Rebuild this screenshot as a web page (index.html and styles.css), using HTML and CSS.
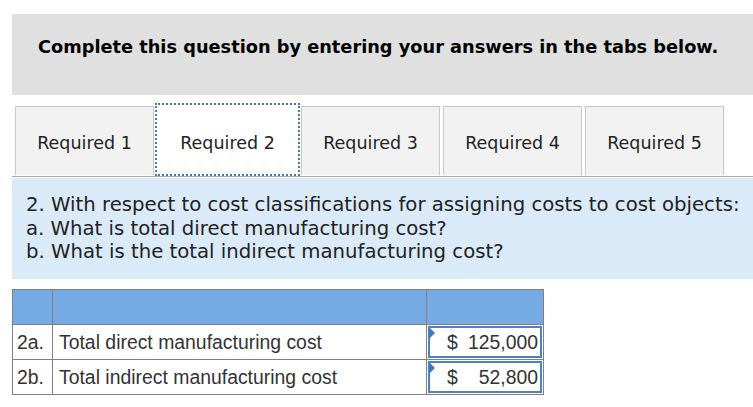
FILE: index.html
```html
<!DOCTYPE html>
<html>
<head>
<meta charset="utf-8">
<link rel="stylesheet" href="styles.css">
</head>
<body>
<div class="page">
  <div class="banner">Complete this question by entering your answers in the tabs below.</div>
  <div class="tabs">
    <div class="tab">Required 1</div>
    <div class="tab active">Required 2</div>
    <div class="tab">Required 3</div>
    <div class="tab">Required 4</div>
    <div class="tab">Required 5</div>
  </div>
  <div class="question">
    <div>2. With respect to cost classifications for assigning costs to cost objects:</div>
    <div>a. What is total direct manufacturing cost?</div>
    <div>b. What is the total indirect manufacturing cost?</div>
  </div>
  <table class="grid">
    <tr class="head"><td class="c1"></td><td class="c2"></td><td class="c3"></td></tr>
    <tr><td class="c1">2a.</td><td class="c2">Total direct manufacturing cost</td><td class="c3"><div class="input"><span class="cur">$</span><span class="val">125,000</span></div></td></tr>
    <tr><td class="c1">2b.</td><td class="c2">Total indirect manufacturing cost</td><td class="c3"><div class="input"><span class="cur">$</span><span class="val">52,800</span></div></td></tr>
  </table>
</div>
</body>
</html>
```
FILE: styles.css
```css
html, body { margin: 0; padding: 0; background: #fff; }
.page { padding: 14px 0 0 12px; font-family: "DejaVu Sans", Verdana, sans-serif; color: #222; }
.banner {
  height: 81px; background: #e0e0e0; padding: 22px 0 0 26px; font-weight: bold;
  font-size: 17.75px; line-height: 22px; color: #000; box-sizing: border-box;
}
.tabs {
  margin-top: 11px; display: flex; gap: 3px; padding-left: 3px;
  border-bottom: 1px solid #aaa; height: 70px; align-items: flex-start;
}
.tab {
  width: 139px; height: 69px; box-sizing: border-box; background: #f2f2f2;
  border: 1px solid #c8c8c8; border-bottom: none; display: flex; align-items: center;
  justify-content: center; font-size: 17.5px; color: #222; padding-top: 3px;
}
.tab.active {
  background: #fff; height: 73px; margin-top: -3px; width: 145px; padding-top: 6px;
  border: 2px dotted #3f78c4; margin-left: -2px; margin-right: -2px; position: relative; z-index: 1;
}
.question {
  margin-top: 1px; background: #daeaf8; height: 101px; box-sizing: border-box;
  padding: 15px 0 0 14px; font-size: 19.7px; line-height: 23.7px; color: #222;
}
.grid {
  margin-top: 10px; border-collapse: collapse; font-family: "Liberation Sans", Arial, sans-serif;
  font-size: 19.4px; color: #333;
}
.grid td { border: 1px solid #808080; height: 35px; padding: 0; box-sizing: border-box; }
.grid .head td { background: #76aae2; }
.c1 { width: 40px; padding-left: 4px !important; }
.c2 { width: 374px; padding-left: 6px !important; }
.c3 { width: 117px; }
.input {
  position: relative; margin: 0 1px 0 1px; height: 32px; box-sizing: border-box;
  border: 2px solid #4d80c4; display: flex; align-items: center; justify-content: space-between;
  padding: 0 2px 0 17px; background: #fff;
}
.input::before {
  content: ""; position: absolute; left: -1px; top: -1px; width: 0; height: 0;
  border-top: 6px solid transparent; border-bottom: 6px solid transparent; border-left: 6px solid #3f78c4;
}
```
